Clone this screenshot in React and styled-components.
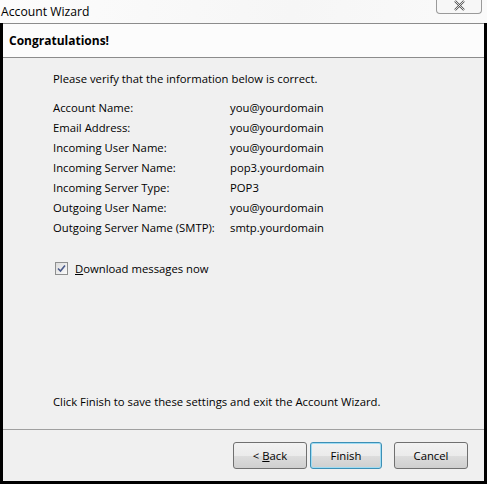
import React from 'react';
import styled, { createGlobalStyle } from 'styled-components';

const GlobalStyle = createGlobalStyle`
  html, body {
    margin: 0;
    padding: 0;
    background: #ffffff;
  }
  body {
    font-family: "Open Sans", "Noto Sans", sans-serif;
    font-size: 11.3px;
    color: #000;
  }
`;

const rows = [
  ['Account Name:', 'you@yourdomain'],
  ['Email Address:', 'you@yourdomain'],
  ['Incoming User Name:', 'you@yourdomain'],
  ['Incoming Server Name:', 'pop3.yourdomain'],
  ['Incoming Server Type:', 'POP3'],
  ['Outgoing User Name:', 'you@yourdomain'],
  ['Outgoing Server Name (SMTP):', 'smtp.yourdomain'],
];

const Window = styled.div`
  width: 487px;
  height: 484px;
  display: flex;
  flex-direction: column;
  box-sizing: border-box;
  overflow: hidden;
  background: #fbfbfb;
`;

const TitleBar = styled.div`
  height: 23px;
  flex-shrink: 0;
  display: flex;
  align-items: center;
  justify-content: space-between;
  padding-left: 1px;
  background: linear-gradient(100deg, #fcfcfc 0%, #f6f6f6 60%, #fafafa 100%);
  font-size: 12.2px;
  position: relative;
`;

const CloseButton = styled.div`
  position: absolute;
  top: -2px;
  right: 5px;
  width: 44px;
  height: 15px;
  border: 1px solid #9a9a9a;
  border-top: none;
  border-radius: 0 0 4px 4px;
  background: #f7f7f7;
  display: flex;
  align-items: center;
  justify-content: center;
`;

const Frame = styled.div`
  flex: 1;
  display: flex;
  flex-direction: column;
  border: 3px solid #000;
  border-top: none;
  background: #f0f0f0;
`;

const Header = styled.div`
  height: 33px;
  flex-shrink: 0;
  background: #fcfcfc;
  border-top: 1px solid #8c8c8c;
  border-bottom: 1px solid #8c8c8c;
  display: flex;
  align-items: center;
  padding-left: 6px;
  font-weight: 700;
  font-size: 12px;
`;

const Body = styled.div`
  flex: 1;
  display: flex;
  flex-direction: column;
  padding: 11px 0 0 50px;
`;

const Intro = styled.div`
  line-height: 20px;
  margin-bottom: 8px;
`;

const InfoGrid = styled.div`
  display: grid;
  grid-template-columns: 177px auto;
  grid-auto-rows: 20px;
  align-items: center;
`;

const CheckRow = styled.label`
  display: flex;
  align-items: center;
  gap: 7px;
  margin-top: 21px;
  margin-left: 2px;
  height: 20px;
`;

const Box = styled.span`
  width: 11px;
  height: 11px;
  border: 1px solid #8e8f8f;
  background: linear-gradient(135deg, #dcdcdc, #fbfbfb);
  display: flex;
  align-items: center;
  justify-content: center;
`;

const Footer = styled.div`
  margin-top: auto;
  line-height: 20px;
  margin-bottom: 17px;
`;

const ButtonBar = styled.div`
  height: 52px;
  flex-shrink: 0;
  border-top: 1px solid #a0a0a0;
  display: flex;
  align-items: flex-start;
  justify-content: flex-end;
  padding: 12px 16px 0 0;
  box-sizing: border-box;
`;

const Button = styled.div`
  width: ${p => p.w}px;
  height: 27px;
  box-sizing: border-box;
  border: 1px solid ${p => (p.primary ? '#3c8fb5' : '#707070')};
  box-shadow: ${p => (p.primary ? 'inset 0 0 0 1px #9fdcf3' : 'none')};
  border-radius: 3px;
  background: linear-gradient(#f2f2f2 0%, #ebebeb 50%, #dddddd 51%, #cfcfcf 100%);
  display: flex;
  align-items: center;
  justify-content: center;
  margin-left: ${p => p.gap}px;
`;

const U = styled.span`
  text-decoration: underline;
`;

export default function App() {
  return (
    <Window>
      <GlobalStyle />
      <TitleBar>
        <span>Account Wizard</span>
        <CloseButton>
          <svg width="13" height="11" viewBox="0 0 13 11">
            <path d="M2 1 L11 10 M11 1 L2 10" stroke="#555" strokeWidth="2.2" fill="none" />
            <path d="M2 1 L11 10 M11 1 L2 10" stroke="#fff" strokeWidth="0.8" fill="none" />
          </svg>
        </CloseButton>
      </TitleBar>
      <Frame>
        <Header>Congratulations!</Header>
        <Body>
          <Intro>Please verify that the information below is correct.</Intro>
          <InfoGrid>
            {rows.map(([k, v]) => (
              <React.Fragment key={k}>
                <span>{k}</span>
                <span>{v}</span>
              </React.Fragment>
            ))}
          </InfoGrid>
          <CheckRow>
            <Box>
              <svg width="9" height="9" viewBox="0 0 9 9">
                <path d="M1 4.5 L3.5 7 L8 1.5" stroke="#4a5a8a" strokeWidth="1.6" fill="none" />
              </svg>
            </Box>
            <span><U>D</U>ownload messages now</span>
          </CheckRow>
          <Footer>Click Finish to save these settings and exit the Account Wizard.</Footer>
        </Body>
        <ButtonBar>
          <Button w={74} gap={0}>&lt;&nbsp;<U>B</U>ack</Button>
          <Button w={72} gap={3} primary>Finish</Button>
          <Button w={74} gap={12}>Cancel</Button>
        </ButtonBar>
      </Frame>
    </Window>
  );
}
